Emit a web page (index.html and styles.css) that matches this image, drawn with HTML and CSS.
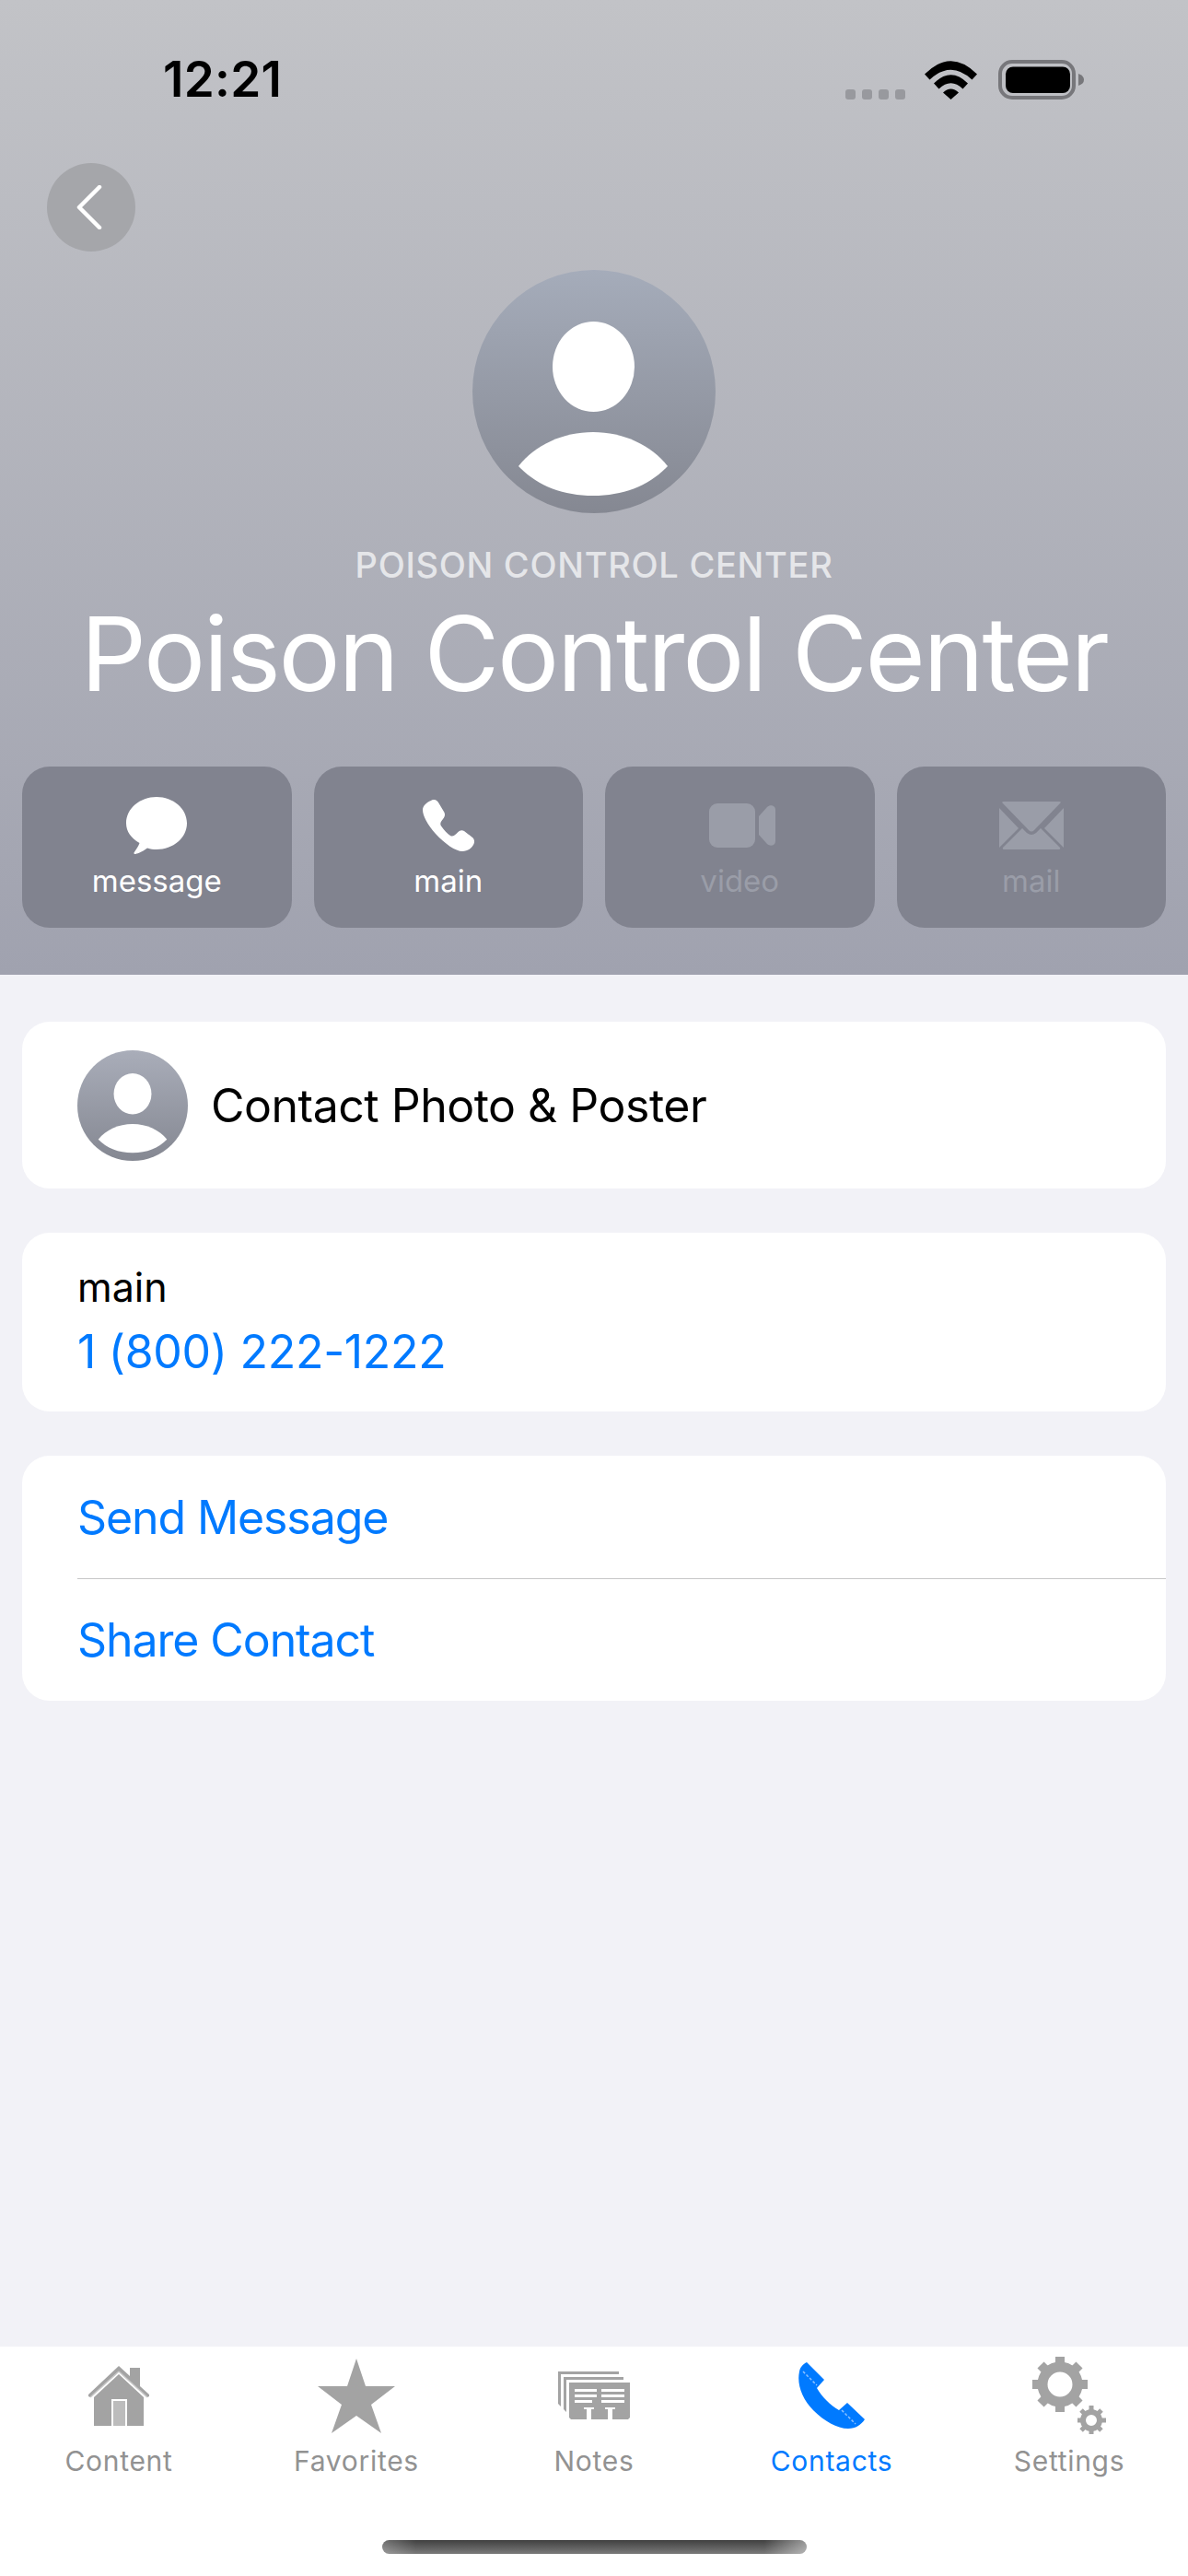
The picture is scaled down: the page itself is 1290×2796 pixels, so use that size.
FILE: index.html
```html
<!DOCTYPE html>
<html lang="en">
<head>
    <meta charset="UTF-8">
    <meta name="viewport" content="width=device-width, initial-scale=1.0">
    <title>Poison Control Center</title>
    <link rel="stylesheet" href="styles.css">
</head>
<body>

    <header class="hero">
        <div class="status-bar">
            <span class="status-time">12:21</span>
            <div class="status-icons">
                <div class="signal"><span></span><span></span><span></span><span></span></div>
                <svg class="wifi" viewBox="0 0 57 42">
                    <path d="M0 14.5 Q28.5 -14 57 14.5 L51.5 20.5 Q28.5 -1 5.5 20.5Z" fill="#000"/>
                    <path d="M10 24.5 Q28.5 6 47 24.5 L41.5 30.5 Q28.5 18 15.5 30.5Z" fill="#000"/>
                    <path d="M20 34.5 Q28.5 26.500 37 34.500 L28.500 42Z" fill="#000"/>
                </svg>
                <svg class="battery" viewBox="0 0 93 43">
                    <rect x="2" y="2" width="80" height="39" rx="13" fill="none" stroke="#77777b" stroke-width="4"/>
                    <rect x="8" y="7.500" width="70" height="28.500" rx="8" fill="#000"/>
                    <path d="M87 15 Q93 17 93 21.500 Q93 26 87 28Z" fill="#77777b"/>
                </svg>
            </div>
        </div>

        <button class="back-button">
            <svg viewBox="0 0 32 48" width="32" height="48">
                <path d="M25 2 L3 24 L25 46" fill="none" stroke="#fff" stroke-width="4.500" stroke-linecap="round" stroke-linejoin="round"/>
            </svg>
        </button>

        <svg class="avatar" viewBox="0 0 264 264">
            <defs>
                <linearGradient id="avatarFill" x1="0" y1="0" x2="0" y2="1">
                    <stop offset="0" stop-color="#a5acba"/>
                    <stop offset="1" stop-color="#858892"/>
                </linearGradient>
            </defs>
            <circle cx="132" cy="132" r="132" fill="url(#avatarFill)"/>
            <ellipse cx="131.500" cy="105" rx="44.500" ry="49" fill="#fff"/>
            <path d="M50 213 C68 190 98 176 131 176 C164 176 194 190 212 213 C192 234 164 245 131 245 C98 245 70 234 50 213Z" fill="#fff"/>
        </svg>

        <div class="hero-subtitle">POISON CONTROL CENTER</div>
        <h1 class="hero-title">Poison Control Center</h1>

        <div class="actions">
            <div class="action">
                <div class="action-icon">
                    <svg width="66" height="62" viewBox="0 0 66 62">
                        <path d="M33 0 C51 0 66 12.500 66 28.500 C66 44.500 51 57 33 57 C29.500 57 26.500 56.500 23 55.500 C17 60 11 62 9.500 62 C8.500 62 8 61 8.800 60 C11 57 13.500 53 14.500 50 C5.500 45 0 37.500 0 28.500 C0 12.500 15 0 33 0Z" fill="#fff"/>
                    </svg>
                </div>
                <span class="action-label">message</span>
            </div>
            <div class="action">
                <div class="action-icon">
                    <svg width="56" height="56" viewBox="0 0 56 56">
                        <path d="M9 1 C12 -1 15 0 17 3 L23 13 C24.500 15.500 24.500 17.500 22 21 C19.500 24 18.500 26 20 28.500 C23 33 27 37 30 39 C32.500 40.500 34.500 39 38 35.500 C40.500 33 42.500 32.500 45 34 L54 41 C56.500 43 56.500 46.500 55 49 C52 54 48 56 43 56 C36 56 24 48 14 37 C5 27 0 17 0 11 C0 7 4 3 9 1Z" fill="#fff"/>
                    </svg>
                </div>
                <span class="action-label">main</span>
            </div>
            <div class="action action-off">
                <div class="action-icon">
                    <svg width="78" height="50" viewBox="-6 0 78 50">
                        <rect x="0" y="1" width="50" height="48" rx="9" fill="#9a9da8"/>
                        <path d="M54 15 L63 5 C66 2 72 3 72 8 L72 42 C72 47 66 48 63 45 L54 35 Z" fill="#9a9da8"/>
                    </svg>
                </div>
                <span class="action-label">video</span>
            </div>
            <div class="action action-off">
                <div class="action-icon">
                    <svg width="70" height="52" viewBox="0 0 70 52">
                        <path d="M5 0 H65 Q68 0 66 2 L38 31 Q35 34 32 31 L4 2 Q2 0 5 0Z" fill="#9a9da8"/>
                        <path d="M0 7 L21 29 L0 50Z" fill="#9a9da8"/>
                        <path d="M70 7 L49 29 L70 50Z" fill="#9a9da8"/>
                        <path d="M4 50 L25 29 L30 34 Q35 38 40 34 L45 29 L66 50 Q67 52 64 52 H6 Q3 52 4 50Z" fill="#9a9da8"/>
                    </svg>
                </div>
                <span class="action-label">mail</span>
            </div>
        </div>
    </header>

    <main class="content">
        <section class="card photo-card">
            <svg class="avatar-small" viewBox="0 0 264 264">
                <defs>
                    <linearGradient id="avatarSmall" x1="0" y1="0" x2="0" y2="1">
                        <stop offset="0" stop-color="#a9adb9"/>
                        <stop offset="1" stop-color="#858892"/>
                    </linearGradient>
                </defs>
                <circle cx="132" cy="132" r="132" fill="url(#avatarSmall)"/>
                <ellipse cx="132" cy="104" rx="45" ry="49" fill="#fff"/>
                <path d="M50 213 C68 190 98 176 132 176 C166 176 196 190 214 213 C194 234 166 245 132 245 C98 245 70 234 50 213Z" fill="#fff"/>
            </svg>
            <span class="row-text photo-text">Contact Photo &amp; Poster</span>
        </section>

        <section class="card phone-card">
            <div class="phone-label">main</div>
            <div class="row-text link phone-number">1 (800) 222-1222</div>
        </section>

        <section class="card list-card">
            <div class="list-row row-text link">Send Message</div>
            <div class="list-row row-text link">Share Contact</div>
        </section>
    </main>

    <footer class="tab-bar">
        <nav class="tabs">
            <div class="tab">
                <div class="tab-icon">
                    <svg width="66" height="66" viewBox="0 0 66 66">
                        <path d="M33 1 L45 12 V3 H56 V23 L66 32 V34 L64 35 L33 7 L2 35 L0 34 V32Z" fill="#a3a3a3"/>
                        <path d="M33 10 L60 35 V66 H6 V35Z" fill="#a3a3a3"/>
                        <path d="M33 7 L2 35 M33 7 L64 35" stroke="#c8c8c8" stroke-width="1.500" fill="none"/>
                        <rect x="25" y="37" width="17" height="29" fill="#fff"/>
                        <rect x="27" y="39" width="13" height="27" fill="#bcbcbc"/>
                    </svg>
                </div>
                <span>Content</span>
            </div>
            <div class="tab">
                <div class="tab-icon">
                    <svg width="84" height="81" viewBox="0 0 84 81">
                        <path d="M42 0 L52 30 L84 30 L58 50 L69 81 L42 62 L15 81 L26 50 L0 30 L32 30Z" fill="#a3a3a3"/>
                    </svg>
                </div>
                <span>Favorites</span>
            </div>
            <div class="tab">
                <div class="tab-icon">
                    <svg width="78" height="52" viewBox="0 0 78 52">
                        <path d="M0 0 H66 V3 H3 V38 L0 35Z M6 6 H71 V9 H9 V44 L6 41Z" fill="#a3a3a3"/>
                        <path d="M12 12 H78 V50 L76 52 H14 L12 50Z" fill="#a3a3a3"/>
                        <path d="M18 19 H42 V22 H18Z M18 25 H42 V28 H18Z M18 31 H37 V34 H18Z M47 19 H72 V22 H47Z M47 25 H72 V28 H47Z M47 31 H72 V34 H47Z" fill="#fff"/>
                        <path d="M28 39 H39 V41 H36 V52 H31 V41 H28Z M51 39 H62 V41 H59 V52 H54 V41 H51Z" fill="#fff"/>
                    </svg>
                </div>
                <span>Notes</span>
            </div>
            <div class="tab tab-active">
                <div class="tab-icon">
                    <svg width="72" height="72" viewBox="0 0 72 72">
                        <path d="M9 0 L28 19 L20 28 C26 38 34 46 44 52 L53 44 L72 62 C68 68 62 72 54 72 C42 72 28 64 16 52 C4 40 -2 24 1 10 C2 5 5 2 9 0Z" fill="#007aff"/>
                        <path d="M5 10 L20 25 M47 52 L62 67" stroke="#8fc2ff" stroke-width="1.500" stroke-dasharray="3 2"/>
                    </svg>
                </div>
                <span>Contacts</span>
            </div>
            <div class="tab">
                <div class="tab-icon">
                    <svg width="80" height="84" viewBox="0 0 80 84">
                        <circle cx="30" cy="30" r="19" fill="none" stroke="#a3a3a3" stroke-width="11"/>
                        <path d="M30 0 V60 M0 30 H60 M9 9 L51 51 M51 9 L9 51" stroke="#a3a3a3" stroke-width="10" stroke-dasharray="11 38 11" fill="none"/>
                        <circle cx="64" cy="69" r="9" fill="none" stroke="#a3a3a3" stroke-width="6"/>
                        <path d="M64 53 V84 M49 69 H80 M53 58 L75 80 M75 58 L53 80" stroke="#a3a3a3" stroke-width="5" stroke-dasharray="6 19 6" fill="none"/>
                    </svg>
                </div>
                <span>Settings</span>
            </div>
        </nav>
        <div class="home-indicator"></div>
    </footer>

</body>
</html>
```

FILE: styles.css
```css
* {
    box-sizing: border-box;
}

body {
    font-family: 'Inter', 'Liberation Sans', sans-serif;
    margin: 0;
    padding: 0;
    width: 1290px;
    height: 2796px;
    overflow: hidden;
    display: flex;
    flex-direction: column;
    background-color: #f2f2f7;
}

/* top area */
.hero {
    height: 1058px;
    padding: 65px 24px 0;
    display: flex;
    flex-direction: column;
    background: linear-gradient(to bottom, #c2c3c7, #a0a2af);
}

.status-bar {
    height: 43px;
    display: flex;
    justify-content: space-between;
    align-items: center;
    padding: 0 89px 0 153px;
}

.status-time {
    font-size: 53px;
    font-weight: 600;
    line-height: 45px;
    letter-spacing: .3px;
    color: #000;
}

.status-icons {
    display: flex;
    align-items: flex-end;
}

.signal {
    display: flex;
    gap: 7px;
    margin-right: 21px;
}

.signal span {
    width: 11px;
    height: 11px;
    border-radius: 3px;
    background-color: #98999e;
}

.wifi {
    width: 57px;
    height: 42px;
    margin-right: 23px;
}

.battery {
    width: 93px;
    height: 43px;
}

.back-button {
    width: 96px;
    height: 96px;
    margin: 69px 0 0 27px;
    padding: 0;
    border: none;
    border-radius: 50%;
    background-color: #a5a6aa;
    display: flex;
    align-items: center;
    justify-content: center;
}

.avatar {
    width: 264px;
    height: 264px;
    margin: 20px auto 0;
    display: block;
}

.hero-subtitle {
    margin-top: 34px;
    text-align: center;
    font-size: 38px;
    line-height: 44px;
    font-weight: 500;
    letter-spacing: .7px;
    color: #e5e6e9;
}

.hero-title {
    margin: 12px 0 0;
    text-align: center;
    font-size: 112px;
    line-height: 124px;
    font-weight: 400;
    letter-spacing: -2.3px;
    color: #fff;
    white-space: nowrap;
}

.actions {
    margin-top: 61px;
    display: grid;
    grid-template-columns: repeat(4, 1fr);
    gap: 24px;
}

.action {
    height: 175px;
    padding-top: 32px;
    border-radius: 30px;
    background-color: #81838f;
    display: flex;
    flex-direction: column;
    align-items: center;
    color: #fff;
}

.action-icon {
    height: 64px;
    display: flex;
    align-items: center;
}

.action-label {
    margin-top: 8px;
    font-size: 33px;
    line-height: 40px;
}

.action-off {
    color: #9a9da8;
}

/* cards */
.content {
    flex: 1;
    padding: 51px 24px 0;
}

.card {
    background-color: #fff;
    border-radius: 30px;
    margin-bottom: 48px;
}

.photo-card {
    height: 181px;
    padding-left: 60px;
    display: flex;
    align-items: center;
    gap: 25px;
}

.avatar-small {
    width: 120px;
    height: 120px;
}

.row-text {
    font-size: 50px;
    line-height: 60px;
    color: #000;
}

.photo-text {
    letter-spacing: -.5px;
}

.link {
    color: #007aff;
}

.phone-card {
    height: 194px;
    padding: 31px 0 0 60px;
}

.phone-label {
    font-size: 43px;
    line-height: 56px;
    color: #000;
    margin-bottom: 12px;
}

.phone-number {
    letter-spacing: -.3px;
}

.list-card {
    padding-left: 60px;
}

.list-row {
    height: 133px;
    display: flex;
    align-items: center;
    letter-spacing: -1.1px;
}

.list-row + .list-row {
    border-top: 1px solid #c6c6c8;
}

/* bottom tabs */
.tab-bar {
    height: 249px;
    background-color: #fff;
    position: relative;
}

.tabs {
    display: grid;
    grid-template-columns: repeat(5, 1fr);
}

.tab {
    display: flex;
    flex-direction: column;
    align-items: center;
    color: #929292;
    font-size: 30px;
    line-height: 36px;
    letter-spacing: .7px;
}

.tab-icon {
    height: 106px;
    display: flex;
    align-items: center;
    justify-content: center;
}

.tab-active {
    color: #007aff;
}

.home-indicator {
    position: absolute;
    left: 415px;
    top: 210px;
    width: 461px;
    height: 15px;
    border-radius: 8px;
    background:
        linear-gradient(to right, rgba(255,255,255,.25), rgba(255,255,255,0) 8%, rgba(255,255,255,0) 90%, rgba(255,255,255,.45)),
        linear-gradient(to bottom, #404040, #7a7a7a);
}
```
